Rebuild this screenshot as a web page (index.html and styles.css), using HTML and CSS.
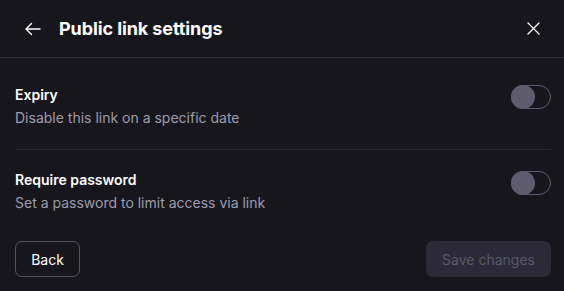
FILE: index.html
```html
<!DOCTYPE html>
<html>
<head>
<meta charset="utf-8">
<link rel="stylesheet" href="styles.css">
</head>
<body>
<div class="dialog">
  <header class="header">
    <button class="icon-btn back-icon" aria-label="Back">
      <svg width="18" height="18" viewBox="0 0 18 18" fill="none" stroke="#fff" stroke-width="1.4" stroke-linecap="round" stroke-linejoin="round"><path d="M16 9H2M7.5 3.5L2 9l5.5 5.5"/></svg>
    </button>
    <h1 class="title">Public link settings</h1>
    <button class="icon-btn close-icon" aria-label="Close">
      <svg width="13" height="13" viewBox="0 0 13 13" fill="none" stroke="#fff" stroke-width="1.3" stroke-linecap="round"><path d="M1 1l11 11M12 1L1 12"/></svg>
    </button>
  </header>
  <section class="body">
    <div class="row first">
      <div class="text">
        <div class="label">Expiry</div>
        <div class="desc">Disable this link on a specific date</div>
      </div>
      <span class="toggle"><span class="knob"></span></span>
    </div>
    <div class="row second">
      <div class="text">
        <div class="label">Require password</div>
        <div class="desc">Set a password to limit access via link</div>
      </div>
      <span class="toggle"><span class="knob"></span></span>
    </div>
    <div class="actions">
      <button class="btn btn-back">Back</button>
      <button class="btn btn-save" disabled>Save changes</button>
    </div>
  </section>
</div>
</body>
</html>
```
FILE: styles.css
```css
* { box-sizing: border-box; }
html, body { margin: 0; padding: 0; }
body {
  background: #17161d;
  font-family: Inter, "Noto Sans", sans-serif;
  color: #fff;
  width: 564px;
  height: 291px;
  overflow: hidden;
}
.dialog { display: flex; flex-direction: column; }
.header {
  height: 58px;
  border-bottom: 1px solid #2e2c38;
  display: flex;
  align-items: center;
  padding: 0 21px 0 24px;
}
.icon-btn {
  background: none;
  border: 0;
  padding: 0;
  display: flex;
  align-items: center;
  justify-content: center;
  cursor: pointer;
}
.back-icon { width: 18px; height: 18px; margin-right: 17px; }
.title {
  margin: 0;
  font-size: 18px;
  font-weight: 700;
  letter-spacing: -0.1px;
  flex: 1;
}
.close-icon { width: 20px; height: 20px; margin-top: -1px; }
.body { padding: 0 13px 14px 15px; display: flex; flex-direction: column; }
.row {
  display: flex;
  align-items: flex-start;
  justify-content: space-between;
}
.row.first { padding: 26px 0 20px; border-bottom: 1px solid #2a2933; }
.row.second { padding: 19px 0 0; }
.label { font-size: 14px; font-weight: 600; line-height: 22px; }
.desc { font-size: 14px; color: #9e9cab; line-height: 22px; margin-top: 1px; }
.toggle {
  width: 40px;
  height: 24px;
  border: 1px solid #5d5a6d;
  border-radius: 12px;
  position: relative;
  margin-top: 1px;
  flex-shrink: 0;
}
.row.second .toggle { margin-top: 2px; }
.knob {
  position: absolute;
  left: -1px;
  top: -1px;
  width: 24px;
  height: 24px;
  border-radius: 50%;
  background: #5f5c70;
}
.actions {
  display: flex;
  justify-content: space-between;
  margin-top: 27px;
}
.btn {
  height: 36px;
  border-radius: 7px;
  font-family: Inter, "Noto Sans", sans-serif;
  font-size: 14px;
  padding: 0;
  white-space: nowrap;
}
.btn-back {
  background: transparent;
  color: #fff;
  border: 1px solid #56535f;
  width: 65px;
}
.btn-save {
  background: #2b2a36;
  color: #5a5868;
  border: 0;
  width: 125px;
}
```
